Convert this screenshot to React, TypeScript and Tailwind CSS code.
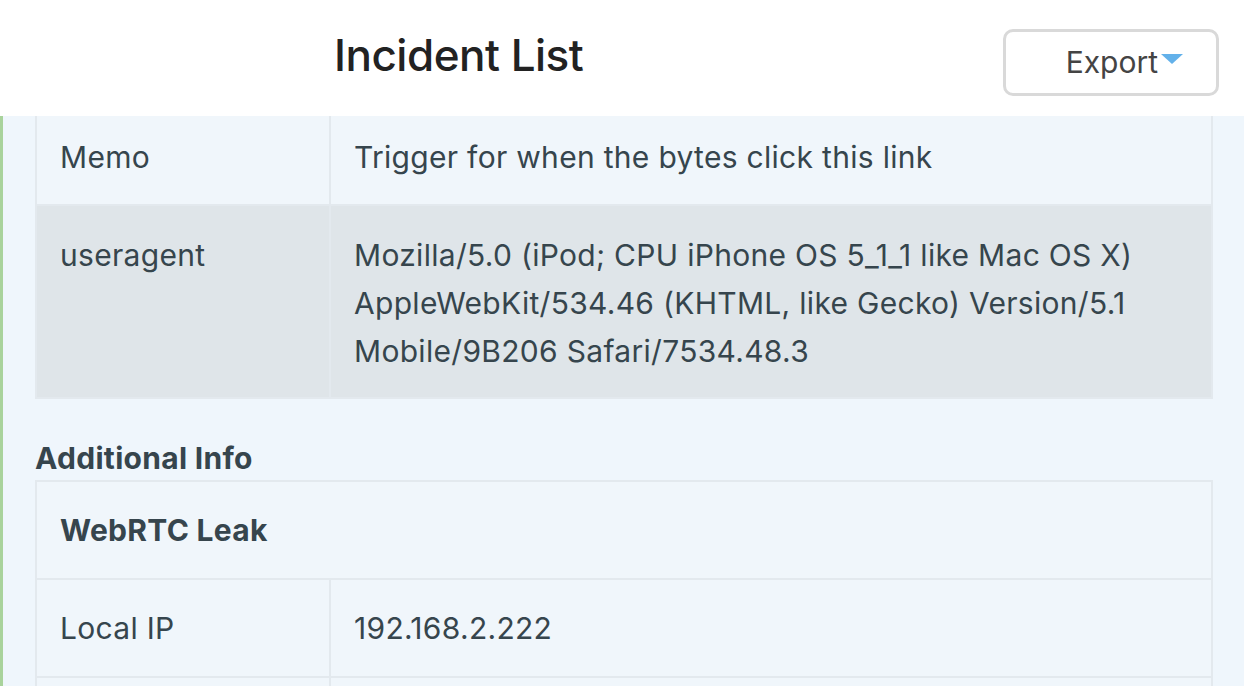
import React from "react";

const rows1 = [
  { k: "Memo", v: ["Trigger for when the bytes click this link"], gray: false },
  {
    k: "useragent",
    v: [
      "Mozilla/5.0 (iPod; CPU iPhone OS 5_1_1 like Mac OS X)",
      "AppleWebKit/534.46 (KHTML, like Gecko) Version/5.1",
      "Mobile/9B206 Safari/7534.48.3",
    ],
    gray: true,
  },
];

function Cell({
  children,
  className = "",
  colSpan,
}: {
  children: React.ReactNode;
  className?: string;
  colSpan?: number;
}) {
  return (
    <td colSpan={colSpan} className={`border-2 border-[#e3e9ee] pl-[23px] pr-[24px] align-top ${className}`}>
      {children}
    </td>
  );
}

export default function App() {
  return (
    <div
      className="w-[1244px] h-[686px] overflow-hidden bg-white flex flex-col text-[#36454d]"
      style={{ fontFamily: "Inter, 'Noto Sans', sans-serif" }}
    >
      <header className="h-[116px] shrink-0 flex items-center justify-between pl-[334px] pr-[25px]">
        <h1 className="text-[44px] font-medium text-[#222] tracking-[-0.5px] -mt-[7px]">Incident List</h1>
        <button className="w-[216px] h-[67px] mt-[8px] rounded-[10px] border-[3px] border-[#d9d9d9] bg-white flex items-center justify-end pr-[32px] text-[30px] text-[#444]">
          Export
          <svg width="24" height="12" viewBox="0 0 24 12" className="ml-[2px] -mt-[6px]">
            <path d="M1 1 H23 L12 11 Z" fill="#63b1ea" />
          </svg>
        </button>
      </header>
      <main className="flex-1 overflow-hidden bg-[#eff6fc] border-l-[3px] border-[#a9d39c] pl-[32px] pr-[31px] tracking-[0.3px]">
        <table className="w-full border-collapse -mt-[8px] text-[30px] leading-[48px] table-fixed">
          <colgroup>
            <col className="w-[294px]" />
            <col />
          </colgroup>
          <tbody>
            {rows1.map((r) => (
              <tr key={r.k} className={r.gray ? "bg-[#dfe5e9]" : "bg-[#f0f6fb]"}>
                <Cell className={r.gray ? "pt-[25px] pb-[22px]" : "py-[23px]"}>{r.k}</Cell>
                <Cell className={r.gray ? "pt-[25px] pb-[22px]" : "py-[23px]"}>
                  {r.v.map((l) => (
                    <div key={l}>{l}</div>
                  ))}
                </Cell>
              </tr>
            ))}
          </tbody>
        </table>
        <h2 className="mt-[35px] text-[30px] leading-[48px] font-bold -mb-[2px]">Additional Info</h2>
        <table className="w-full border-collapse text-[30px] leading-[48px] table-fixed">
          <colgroup>
            <col className="w-[294px]" />
            <col />
          </colgroup>
          <tbody>
            <tr className="bg-[#f0f6fb]">
              <Cell colSpan={2} className="py-[24px] font-bold">
                WebRTC Leak
              </Cell>
            </tr>
            <tr className="bg-[#f0f6fb]">
              <Cell className="py-[24px]">Local IP</Cell>
              <Cell className="py-[24px]">192.168.2.222</Cell>
            </tr>
            <tr className="bg-[#f0f6fb]">
              <Cell className="py-[24px]">&nbsp;</Cell>
              <Cell className="py-[24px]">&nbsp;</Cell>
            </tr>
          </tbody>
        </table>
      </main>
    </div>
  );
}
